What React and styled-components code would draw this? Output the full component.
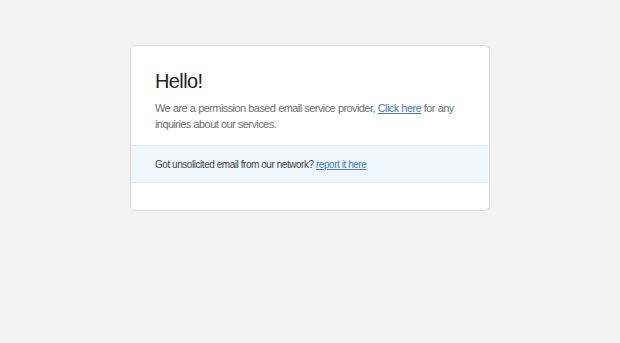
import React from 'react'
import styled, { createGlobalStyle } from 'styled-components'

const GlobalStyle = createGlobalStyle`
    html, body {
        margin: 0;
        padding: 0;
        background-color: #f2f2f2;
        font-family: "Liberation Sans", Arial, sans-serif;
    }
`;

const Page = styled.div`
    padding-top: 45px;
    min-height: 343px;
    box-sizing: border-box;
`;

const Card = styled.div`
    width: 360px;
    margin: 0 auto;
    background-color: #fff;
    border: 1px solid #dcdcdc;
    border-radius: 5px;
    box-sizing: border-box;
    overflow: hidden;
`;

const Intro = styled.div`
    padding: 23px 25px 13px 24px;
`;

const Title = styled.h1`
    margin: 0 0 7px;
    font-size: 20px;
    line-height: 24px;
    font-weight: normal;
    letter-spacing: -0.6px;
    color: #222;
`;

const Text = styled.p`
    margin: 0;
    font-size: 11px;
    line-height: 16px;
    letter-spacing: -0.58px;
    word-spacing: 0.3px;
    color: #6f6f6f;
`;

const Link = styled.a`
    color: #4a7cb4;
    text-decoration: underline;
`;

const Notice = styled.div`
    background-color: #f0f7fc;
    border-top: 1px solid #e3ebf0;
    border-bottom: 1px solid #e3ebf0;
    padding: 11px 24px 9px;
    font-size: 10px;
    line-height: 16px;
    letter-spacing: -0.45px;
    color: #444;
`;

const Footer = styled.div`
    height: 27px;
`;

const App = () => {
    return (
        <Page>
            <GlobalStyle />
            <Card>
                <Intro>
                    <Title>Hello!</Title>
                    <Text>
                        We are a permission based email service provider, <Link href="#">Click here</Link> for any inquiries about our services.
                    </Text>
                </Intro>
                <Notice>
                    Got unsolicited email from our network? <Link href="#">report it here</Link>
                </Notice>
                <Footer />
            </Card>
        </Page>
    )
}

export default App
